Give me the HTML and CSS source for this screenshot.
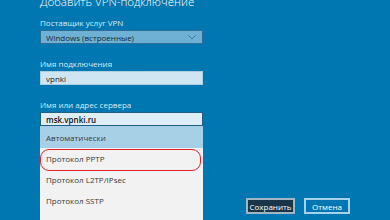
FILE: index.html
```html
<!DOCTYPE html>
<html lang="ru">
<head>
<meta charset="utf-8">
<link rel="stylesheet" href="styles.css">
</head>
<body>
<div class="page">
  <div class="form">
    <h1 class="title">Добавить VPN-подключение</h1>
    <div class="label first">Поставщик услуг VPN</div>
    <div class="select">
      <span>Windows (встроенные)</span>
      <svg class="chev" width="8" height="5" viewBox="0 0 8 5"><path d="M0.5 0.5 L4 4 L7.5 0.5" fill="none" stroke="#4f7a93" stroke-width="1"/></svg>
    </div>
    <div class="label second">Имя подключения</div>
    <div class="input light">vpnki</div>
    <div class="label third">Имя или адрес сервера</div>
    <div class="input focus">msk.vpnki.ru</div>
    <ul class="list">
      <li class="item selected">Автоматически</li>
      <li class="item marked">Протокол PPTP</li>
      <li class="item">Протокол L2TP/IPsec</li>
      <li class="item">Протокол SSTP</li>
      <li class="item"></li>
    </ul>
  </div>
  <div class="buttons">
    <button class="btn save">Сохранить</button>
    <button class="btn cancel">Отмена</button>
  </div>
</div>
</body>
</html>
```
FILE: styles.css
```css
html, body {
  margin: 0;
  padding: 0;
  height: 220px;
  overflow: hidden;
  background: #0077b0;
  font-family: "Open Sans", "Noto Sans", "Liberation Sans", sans-serif;
}
.page {
  display: flex;
  height: 220px;
  overflow: hidden;
}
.form {
  width: 163px;
  padding-left: 40px;
  flex: none;
}
.title {
  margin: -5px 0 0 0;
  font-size: 11.5px;
  line-height: 14px;
  font-weight: 300;
  color: #ffffff;
  white-space: nowrap;
}
.label {
  font-size: 8px;
  line-height: 10px;
  color: #d8ecf6;
  margin-bottom: 2px;
}
.label.first { margin-top: 9px; }
.label.second { margin-top: 15px; }
.label.third { margin-top: 15px; }
.select {
  height: 14px;
  box-sizing: border-box;
  background: #6eb1d4;
  border: 1px solid #2f6e92;
  display: flex;
  align-items: center;
  justify-content: space-between;
  padding: 0 6px 0 5px;
  font-size: 8px;
  color: #1a2a33;
}
.chev { display: block; }
.input {
  height: 14px;
  box-sizing: border-box;
  display: flex;
  align-items: center;
  padding-left: 5px;
  font-size: 8px;
}
.input.light {
  background: #cfe5f1;
  border: 1px solid #a9cfe3;
  color: #1a1a1a;
}
.input.focus {
  background: #dfeef6;
  border: 1px solid #1e5f85;
  color: #111;
  font-weight: 600;
}
.list {
  list-style: none;
  margin: 0;
  padding: 1px 0 0 0;
  background: #f2f2f2;
}
.item {
  position: relative;
  height: 21px;
  display: flex;
  align-items: center;
  padding-left: 6px;
  font-size: 8px;
  color: #3a3a3a;
}
.item.selected {
  height: 22px;
  margin-top: -1px;
  background: #a7d0e6;
}
.item.marked::after {
  content: "";
  position: absolute;
  left: 0;
  top: 1px;
  width: 161px;
  height: 22px;
  box-sizing: border-box;
  border: 1.5px solid #e0222e;
  border-radius: 9px;
}
.buttons {
  align-self: flex-end;
  margin: 0 0 6px 43px;
  display: flex;
  gap: 9px;
}
.btn {
  height: 16px;
  box-sizing: border-box;
  padding: 0;
  font-family: "Open Sans", "Noto Sans", "Liberation Sans", sans-serif;
  font-size: 8px;
  color: #ffffff;
  display: flex;
  align-items: center;
  justify-content: center;
}
.save {
  width: 49px;
  background: #1a3548;
  border: 2px solid #9fb6c4;
}
.cancel {
  width: 46px;
  background: transparent;
  border: 2px solid #a6d3ea;
}
```
